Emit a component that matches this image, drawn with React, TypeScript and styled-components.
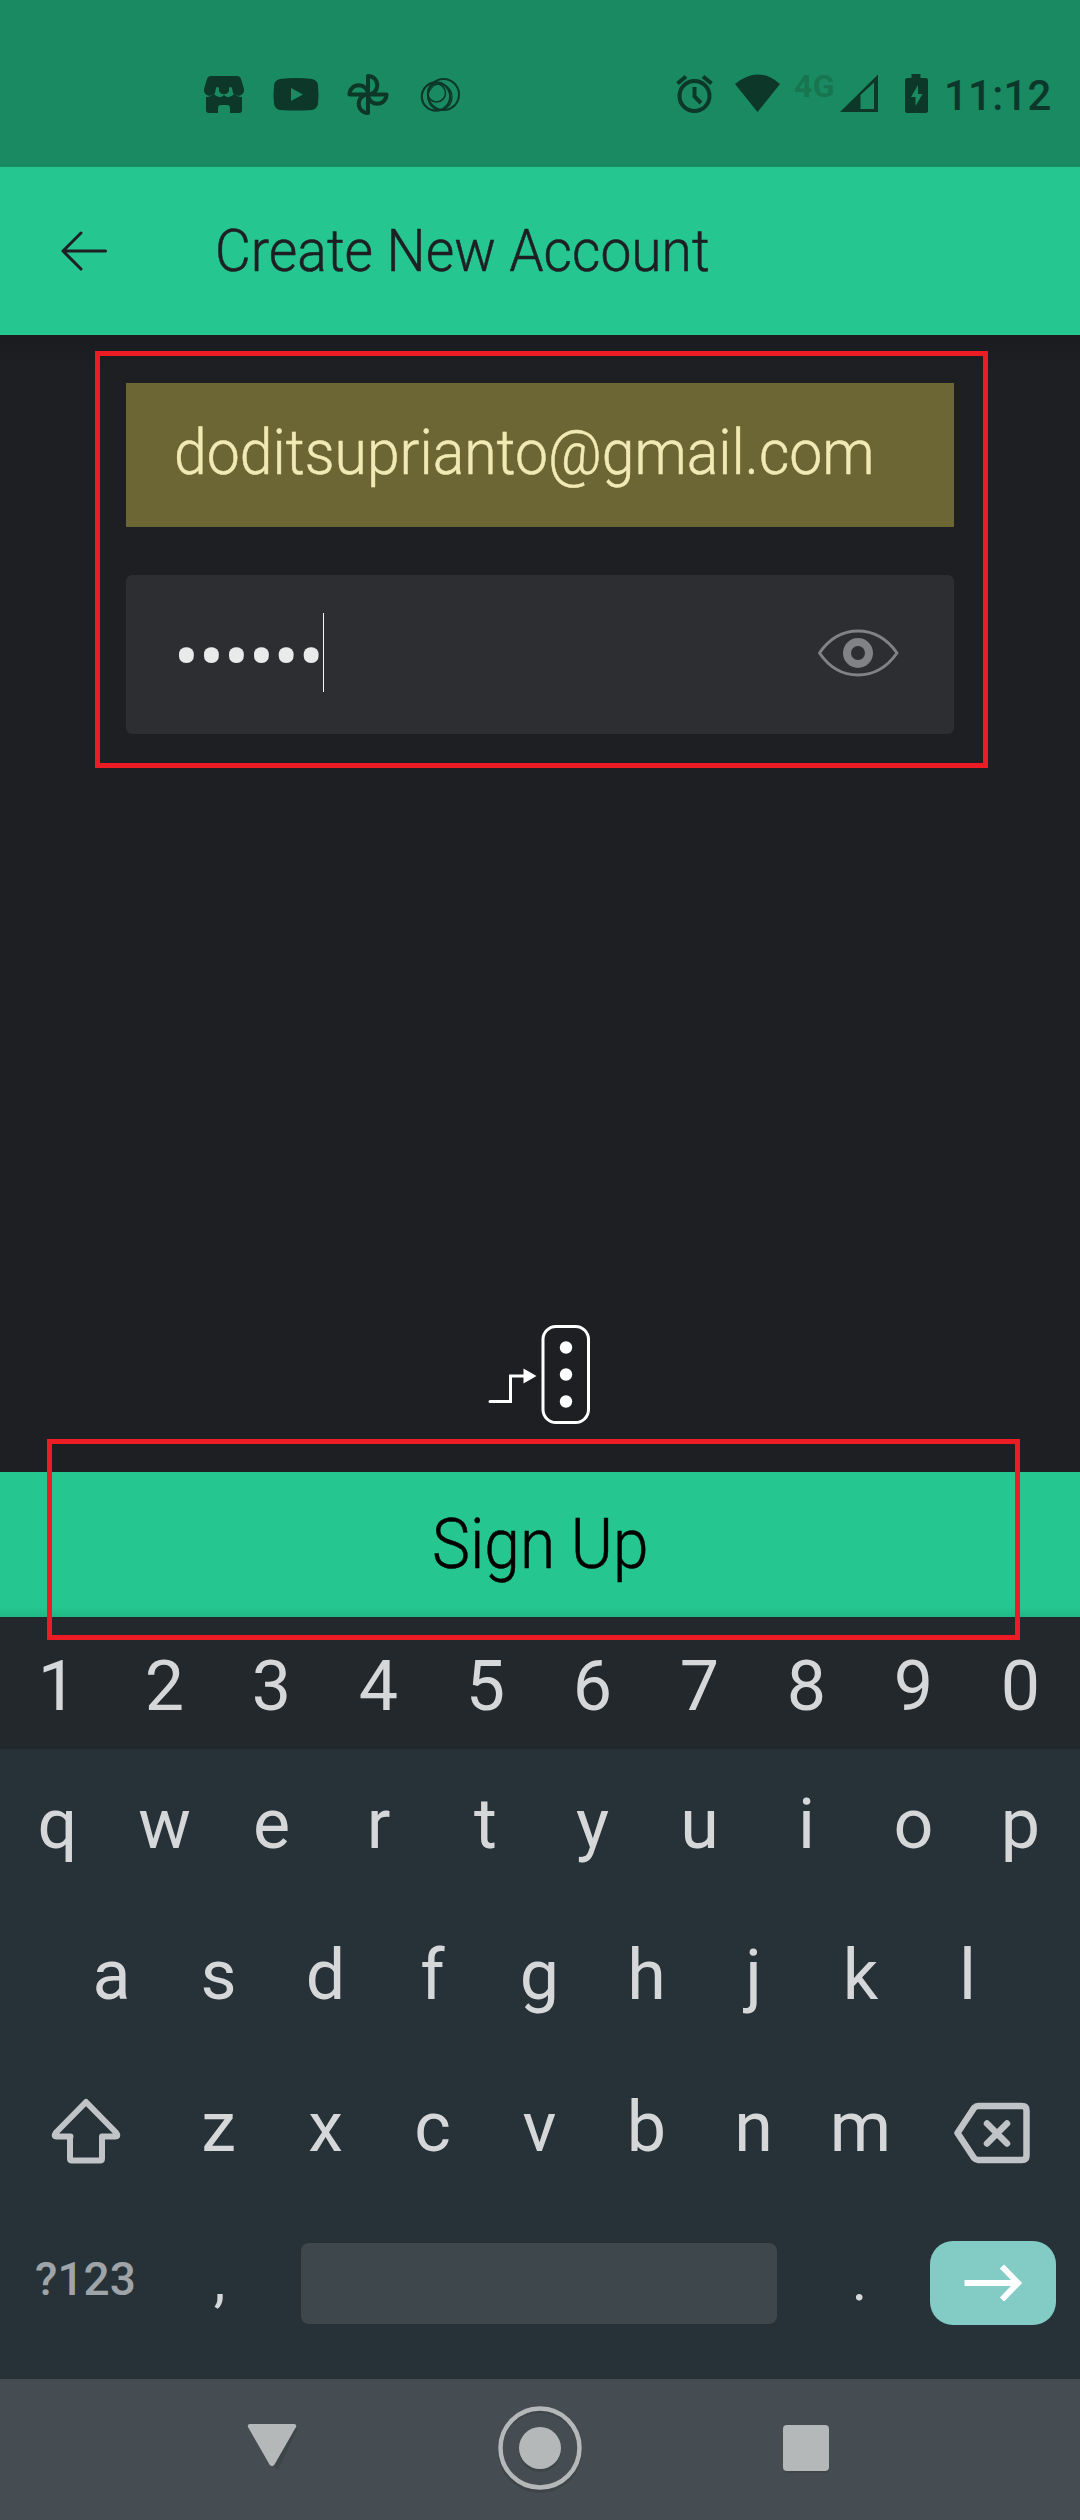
import React from "react";
import styled, { createGlobalStyle } from "styled-components";

const GlobalStyle = createGlobalStyle`
  * { box-sizing: border-box; }
  body { margin: 0; background: #1e1f23; font-family: Roboto, "Liberation Sans", sans-serif; }
  svg { display: block; flex: none; }
`;

const Screen = styled.main`
  display: flex;
  flex-direction: column;
  width: 1080px;
  height: 2520px;
  overflow: hidden;
  background: #1e1f23;
`;

const StatusBar = styled.header`
  display: flex;
  align-items: flex-start;
  height: 167px;
  padding: 72px 0 0 202px;
  background: #1a8a63;
  color: #0c3729;
`;

const Notifications = styled.div`
  display: flex;
  flex: none;
  width: 472px;
`;

const Network = styled.span`
  flex: none;
  width: 45px;
  margin-left: 12px;
  font-size: 32px;
  line-height: 29px;
  font-weight: 700;
  letter-spacing: 0.5px;
  color: #17764f;
`;

const Clock = styled.time`
  flex: 1;
  margin-left: -2px;
  font-size: 42px;
  line-height: 48px;
  font-weight: 500;
  letter-spacing: 0.2px;
  white-space: nowrap;
`;

const AppBar = styled.div`
  display: flex;
  align-items: center;
  height: 168px;
  padding-left: 58px;
  background: #25c68f;
  color: #1e1f23;
`;

const Label = styled.span<{ $size: number; $scale: number; $origin?: string; $lift?: number }>`
  display: block;
  font-size: ${(p) => p.$size}px;
  line-height: 1;
  font-weight: 300;
  white-space: nowrap;
  margin-bottom: ${(p) => p.$lift ?? 0}px;
  transform: scaleX(${(p) => p.$scale});
  transform-origin: ${(p) => p.$origin ?? "left"} center;
  -webkit-text-stroke: 0.5px currentColor;
`;

const Title = styled.h1`
  margin: 0 0 0 105px;
  font: inherit;
`;

const Content = styled.section`
  display: flex;
  flex-direction: column;
  height: 1137px;
  padding: 48px 126px 0;
  background: linear-gradient(#1a1b1f, #1e1f23 30px);
`;

const Form = styled.form`
  position: relative;
  display: flex;
  flex-direction: column;
  gap: 48px;
  margin: 0;
`;

const Highlight = styled.div<{ $inset: string }>`
  position: absolute;
  inset: ${(p) => p.$inset};
  border: 5px solid #ed1c24;
  pointer-events: none;
`;

const EmailField = styled.div`
  display: flex;
  align-items: center;
  height: 144px;
  padding-left: 48px;
  background: #6c6534;
  color: #f1eab4;
`;

const PasswordField = styled.div`
  display: flex;
  align-items: center;
  height: 159px;
  padding: 0 54px 4px 48px;
  border-radius: 6px;
  background: #2d2e32;
`;

const Dots = styled.span`
  width: 149px;
  padding-top: 9px;
  white-space: nowrap;
  font-size: 74px;
  line-height: 80px;
  color: #e9eaea;
`;

const Caret = styled.span`
  width: 1px;
  height: 79px;
  margin-right: auto;
  background: #f4f4f4;
`;

const Provision = styled.div`
  margin: auto 0 46px 361px;
`;

const SignUp = styled.div`
  position: relative;
  display: flex;
  justify-content: center;
  align-items: center;
  height: 145px;
  background: linear-gradient(#25c68f 135px, #21b985);
  color: #000;
`;

const Keyboard = styled.section`
  display: flex;
  flex-direction: column;
  height: 762px;
  background: #273238;
  color: #d6d7d9;
`;

const KeyRow = styled.div<{ $height: number; $left?: number; $drop: number; $dark?: boolean }>`
  display: flex;
  height: ${(p) => p.$height}px;
  padding: ${(p) => p.$drop}px 0 0 ${(p) => p.$left ?? 4}px;
  background: ${(p) => (p.$dark ? "#22282c" : "transparent")};
`;

const Key = styled.span`
  width: 107px;
  text-align: center;
  font-size: 70px;
  line-height: 82px;
`;

const IconKey = styled.span<{ $width: number; $top: number; $indent?: number }>`
  display: flex;
  justify-content: center;
  width: ${(p) => p.$width}px;
  padding-top: ${(p) => p.$top}px;
  padding-left: ${(p) => p.$indent ?? 0}px;
  color: #c0c4c7;
`;

const SymbolsKey = styled.span`
  width: 162px;
  padding: 10px 0 0 1px;
  text-align: center;
  font-size: 46px;
  line-height: 56px;
  font-weight: 500;
  color: #9ea4a7;
`;

const SpaceBar = styled.span`
  width: 476px;
  height: 81px;
  margin: 2px 29px 0 28px;
  border-radius: 8px;
  background: #3d474c;
`;

const Punctuation = styled.span`
  width: 107px;
  padding-top: 4px;
  text-align: center;
  font-size: 59px;
  line-height: 70px;
`;

const GoKey = styled.span`
  display: flex;
  align-items: center;
  justify-content: center;
  width: 126px;
  height: 84px;
  margin-left: 17px;
  border-radius: 23px;
  background: #82ccc5;
`;

const NavBar = styled.nav`
  display: flex;
  height: 141px;
  background: #464d52;
`;

const digits = "1234567890".split("");
const top = "qwertyuiop".split("");
const home = "asdfghjkl".split("");
const bottom = "zxcvbnm".split("");

export default function App() {
  return (
    <>
      <GlobalStyle />
      <Screen>
        <StatusBar>
          <Notifications>
            <svg width="270" height="46" viewBox="202 72 270 46" fill="currentColor">
              <path d="M211 76H237Q240 76 241 79L244 89A6 6 0 0 1 233 93L232 88A1.700 1.700 0 0 0 229 88V91A5.500 5.500 0 0 1 219 91V88A1.700 1.700 0 0 0 216 88L215 93A6 6 0 0 1 204 89L207 79Q208 76 211 76Z" />
              <path d="M206 97q5 0 8-3 5 6 10 1 5 5 10-1 3 3 8 3v13q0 3-3 3h-9v-5q0-3-3-3h-6q-3 0-3 3v5h-9q-3 0-3-3z" />
              <path fillRule="evenodd" d="M280 79q16-2 32 0 5 1 6 6 1 10 0 19-1 5-6 6-16 1-32 0-5-1-6-6-1-9 0-19 1-5 6-6zM291 88v13l12-6.500z" />
              <g fill="none" stroke="currentColor" strokeWidth="4" strokeLinejoin="round">
                <path d="M368 94.500V76a9.250 9.250 0 0 1 0 18.500M368 94.500h18.500a9.250 9.250 0 0 1-18.500 0M368 94.500V113a9.250 9.250 0 0 1 0-18.500M368 94.500h-18.500a9.250 9.250 0 0 1 18.500 0" />
              </g>
              <g fill="none" stroke="currentColor">
                <circle cx="443.500" cy="94.500" r="15.500" strokeWidth="2" />
                <circle cx="436" cy="96.500" r="14.200" strokeWidth="2.200" />
                <circle cx="436.500" cy="93" r="9" strokeWidth="1.500" />
                <ellipse cx="440" cy="97" rx="12" ry="13" strokeWidth="1.200" />
              </g>
            </svg>
          </Notifications>
          <svg width="108" height="44" viewBox="674 72 108 44" fill="currentColor">
            <g fill="none" stroke="currentColor" strokeWidth="4">
              <circle cx="694.500" cy="96" r="15" />
              <path d="M694.500 87v9.500l6.500 6.500M677.500 83.500l8.500-7M711.500 83.500l-8.500-7" />
            </g>
            <path d="M735 84q23-19 45 0L757.500 112z" />
          </svg>
          <Network>4G</Network>
          <svg width="107" height="44" viewBox="839 72 107 44" fill="currentColor">
            <path fillRule="evenodd" d="M840 112l38-37.500V112zM860.500 95v14H874V82.500z" />
            <path fillRule="evenodd" d="M911.500 74h9v4h5q2.500 0 2.500 2.500v30q0 2.500-2.500 2.500h-18q-2.500 0-2.500-2.500v-30q0-2.500 2.500-2.500h4zM918 85l-7 12h4.500v9l7-12h-4.500z" />
          </svg>
          <Clock>11:12</Clock>
        </StatusBar>

        <AppBar>
          <svg width="52" height="44" viewBox="58 229 52 44" fill="none" stroke="currentColor" strokeWidth="3" strokeLinecap="round" strokeLinejoin="round">
            <path d="M105.500 251H63M81 233L63 251l18 18" />
          </svg>
          <Title>
            <Label $size={59} $scale={0.934} $lift={2}>Create New Account</Label>
          </Title>
        </AppBar>

        <Content>
          <Form>
            <EmailField>
              <Label $size={63} $scale={0.935} $lift={5}>doditsuprianto@gmail.com</Label>
            </EmailField>
            <PasswordField>
              <Dots>••••••</Dots>
              <Caret />
              <svg width="84" height="52" viewBox="815.500 626.500 84 52" fill="none" stroke="#818285">
                <path d="M819 652.500Q834 630.500 857.500 630.500T896.500 652.500Q881 674.500 857.500 674.500T819 652.500z" strokeWidth="3" strokeLinejoin="round" />
                <circle cx="857.500" cy="652.500" r="11" strokeWidth="8" />
              </svg>
            </PasswordField>
            <Highlight $inset="-32px -34px -34px -31px" />
          </Form>
          <Provision>
            <svg width="106" height="102" viewBox="487 1324 106 102" fill="none" stroke="#fff" strokeWidth="3">
              <rect x="543" y="1326.500" width="45.500" height="96" rx="13" />
              <path d="M490 1401.500h20.500v-25.500h14" strokeLinecap="round" />
              <path d="M523.500 1368.500v15l13-7.500z" fill="#fff" stroke="none" />
              <g fill="#fff" stroke="none">
                <circle cx="566" cy="1347.500" r="6.200" />
                <circle cx="566" cy="1374.500" r="6.200" />
                <circle cx="566" cy="1401.500" r="6.200" />
              </g>
            </svg>
          </Provision>
        </Content>

        <SignUp>
          <Label $size={70} $scale={0.916} $origin="center" $lift={2}>Sign Up</Label>
          <Highlight $inset="-33px 60px -23px 47px" />
        </SignUp>

        <Keyboard>
          <KeyRow $height={132} $drop={28} $dark>
            {digits.map((k) => <Key key={k}>{k}</Key>)}
          </KeyRow>
          <KeyRow $height={151} $drop={34}>
            {top.map((k) => <Key key={k}>{k}</Key>)}
          </KeyRow>
          <KeyRow $height={151} $drop={34} $left={58}>
            {home.map((k) => <Key key={k}>{k}</Key>)}
          </KeyRow>
          <KeyRow $height={151} $drop={35}>
            <IconKey $width={161} $top={9} $indent={3}>
              <svg width="72" height="70" viewBox="50 2095 72 70" fill="none" stroke="currentColor" strokeWidth="6" strokeLinejoin="round">
                <path d="M70.500 2136.500H57q-4 0-1-4L86 2102l30 30.500q3 4-1 4h-13v22q0 2-2 2H72q-2 0-2-2v-22z" />
              </svg>
            </IconKey>
            {bottom.map((k) => <Key key={k}>{k}</Key>)}
            <IconKey $width={156} $top={15}>
              <svg width="80" height="64" viewBox="952 2101 80 64" fill="none" stroke="currentColor" strokeWidth="6.500" strokeLinejoin="round">
                <path d="M957.500 2133l16.500-25q2-2 4-2h44q4.500 0 4.500 4.500v45q0 4.500-4.500 4.500h-44q-2 0-4-2z" />
                <path d="M987 2123.500l20 20M1007 2123.500l-20 20" strokeLinecap="round" />
              </svg>
            </IconKey>
          </KeyRow>
          <KeyRow $height={177} $drop={39}>
            <SymbolsKey>?123</SymbolsKey>
            <Punctuation>,</Punctuation>
            <SpaceBar />
            <Punctuation>.</Punctuation>
            <GoKey>
              <svg width="58" height="38" viewBox="963 2264 58 38" fill="none" stroke="#fff" strokeWidth="6">
                <path d="M963.500 2283H1016M1001 2266.500L1017 2283l-16 16.500" />
              </svg>
            </GoKey>
          </KeyRow>
        </Keyboard>

        <NavBar>
          <svg width="1080" height="141" viewBox="0 2379 1080 141" fill="#b4b8b9">
            <g fill="#3d4447" opacity=".8">
              <path d="M256 2428h42l-19 40q-2 3-4 0z" />
              <rect x="784" y="2428" width="45" height="45" rx="4" />
              <circle cx="540" cy="2451" r="21" />
              <circle cx="540" cy="2451" r="40" fill="none" stroke="#3d4447" strokeWidth="4" />
            </g>
            <path d="M250 2424h44q3 0 2 3l-21.500 37.500q-2.500 3-5 0L248 2427q-1-3 2-3z" />
            <circle cx="540" cy="2448" r="21" />
            <circle cx="540" cy="2448" r="39.500" fill="none" stroke="#b4b8b9" strokeWidth="4.500" />
            <rect x="783" y="2425" width="46" height="46" rx="4" />
          </svg>
        </NavBar>
      </Screen>
    </>
  );
}
